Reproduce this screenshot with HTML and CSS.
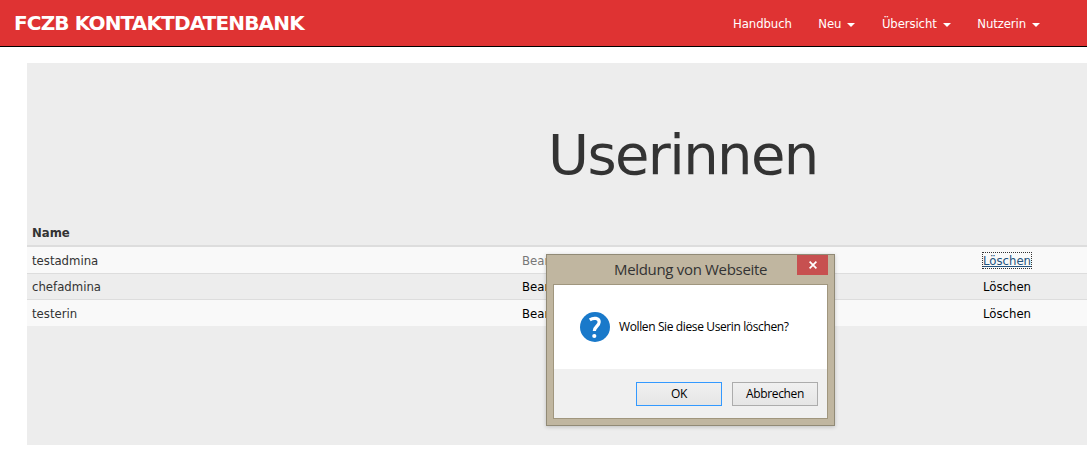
FILE: index.html
```
<!DOCTYPE html>
<html lang="de">
<head>
<meta charset="utf-8">
<title>FCZB Kontaktdatenbank</title>
<link rel="stylesheet" href="styles.css">
</head>
<body>
<header class="navbar">
  <a class="brand">FCZB KONTAKTDATENBANK</a>
  <nav class="menu">
    <a class="item"><span>Handbuch</span></a>
    <a class="item"><span>Neu</span><i class="caret"></i></a>
    <a class="item"><span>Übersicht</span><i class="caret"></i></a>
    <a class="item"><span>Nutzerin</span><i class="caret"></i></a>
  </nav>
</header>
<main class="panel">
  <h1 class="title">Userinnen</h1>
  <div class="table">
    <div class="row head"><span>Name</span></div>
    <div class="row odd first"><span>testadmina</span><a class="link muted">Bearbeiten</a><a class="link"><span class="focused">Löschen</span></a></div>
    <div class="row"><span>chefadmina</span><a class="link">Bearbeiten</a><a class="link">Löschen</a></div>
    <div class="row odd last"><span>testerin</span><a class="link">Bearbeiten</a><a class="link">Löschen</a></div>
  </div>
</main>
<div class="dialog" role="dialog">
  <div class="dialog-bar">
    <span class="dialog-title">Meldung von Webseite</span>
    <button class="close" aria-label="Schließen"><svg width="8" height="8" viewBox="0 0 8 8"><path d="M.6.6 7.4 7.4M7.4.6.6 7.4" stroke="#fff" stroke-width="1.7"/></svg></button>
  </div>
  <div class="dialog-body">
    <div class="message">
      <svg width="30" height="30" viewBox="0 0 30 30"><circle cx="15" cy="15" r="15" fill="#1979ca"/><path d="M9.8 7.8C13.8 5.2 19.2 6 19.2 10.1c0 3.9-4.9 4.5-4.9 8.9" fill="none" stroke="#fff" stroke-width="3.2"/><circle cx="14.3" cy="24" r="2.1" fill="#fff"/></svg>
      <span class="question">Wollen Sie diese Userin löschen?</span>
    </div>
    <div class="actions">
      <button class="btn primary">OK</button>
      <button class="btn">Abbrechen</button>
    </div>
  </div>
</div>
</body>
</html>
```
FILE: styles.css
```
* { box-sizing: border-box; }
body {
  margin: 0;
  height: 450px;
  overflow: hidden;
  background: #fff;
  color: #333;
  font: 13px/18px "DejaVu Sans Condensed", "DejaVu Sans", sans-serif;
  font-stretch: condensed;
}
.navbar {
  height: 47px;
  display: flex;
  justify-content: space-between;
  padding: 0 47px 0 14px;
  background: #df3333;
  border-bottom: 1px solid #000;
  color: #fff;
}
.brand {
  font-family: "DejaVu Sans", sans-serif;
  font-stretch: normal;
  font-size: 20px;
  line-height: 46px;
  font-weight: bold;
  letter-spacing: -.85px;
  white-space: nowrap;
}
.menu { display: flex; gap: 26.5px; line-height: 47px; font-size: 13px; letter-spacing: -.1px; }
.item { display: flex; align-items: center; gap: 6px; }
.caret {
  border: 4px solid transparent;
  border-top-color: #fff;
  border-bottom: 0;
  margin-top: 3px;
}
.panel { margin: 16px 0 0 27px; height: 382px; padding-top: 57px; background: #ededed; }
.title {
  margin: 0 0 33px;
  height: 66px;
  padding-left: 521px;
  font-family: "DejaVu Sans", sans-serif;
  font-stretch: normal;
  font-size: 56px;
  line-height: 70px;
  font-weight: normal;
  letter-spacing: -1.6px;
}
.row {
  display: grid;
  grid-template-columns: 490px 461px 1fr;
  height: 26px;
  padding: 4px 5px 0;
  border-top: 1px solid #ddd;
}
.table .head { height: 26px; padding-top: 5px; border: 0; font-weight: bold; }
.table .first { height: 28px; padding-top: 5px; border-top-width: 2px; }
.table .last { height: 27px; padding-top: 5px; }
.odd { background: #f9f9f9; }
.link { color: #000; }
.muted { color: #777; }
.focused { color: #23527c; text-decoration: underline; outline: 1px dotted #333; }
.dialog {
  position: absolute;
  left: 546px;
  top: 254px;
  width: 289px;
  height: 172px;
  padding: 0 6px 6px;
  border: 1px solid #918a76;
  background: #c0b6a0;
  box-shadow: 0 1px 4px rgba(0,0,0,.2);
  color: #000;
  font: 12px/16px "Open Sans", sans-serif;
  font-stretch: normal;
}
.dialog-bar { height: 29px; display: flex; justify-content: space-between; padding-left: 61px; }
.dialog-title { font-size: 15px; line-height: 29px; color: #333; white-space: nowrap; letter-spacing: -.32px; }
.close { width: 31px; height: 20px; padding: 0; border: 0; background: #c75050; display: flex; align-items: center; justify-content: center; }
.dialog-body { height: 135px; border: 1px solid #a0967e; background: #f0f0f0; }
.message { height: 84px; background: #fff; display: flex; align-items: center; gap: 9px; padding-left: 26px; }
.question { white-space: nowrap; letter-spacing: -.38px; }
.actions { display: flex; gap: 10px; justify-content: flex-end; padding: 13px 9px 0 0; }
.btn {
  width: 86px;
  height: 24px;
  padding: 0;
  border: 1px solid #acacac;
  background: linear-gradient(#f0f0f0, #e5e5e5);
  font: 12px/20px "Open Sans", sans-serif;
  letter-spacing: -.35px;
  color: #000;
}
.primary { border-color: #3399ff; }
```
